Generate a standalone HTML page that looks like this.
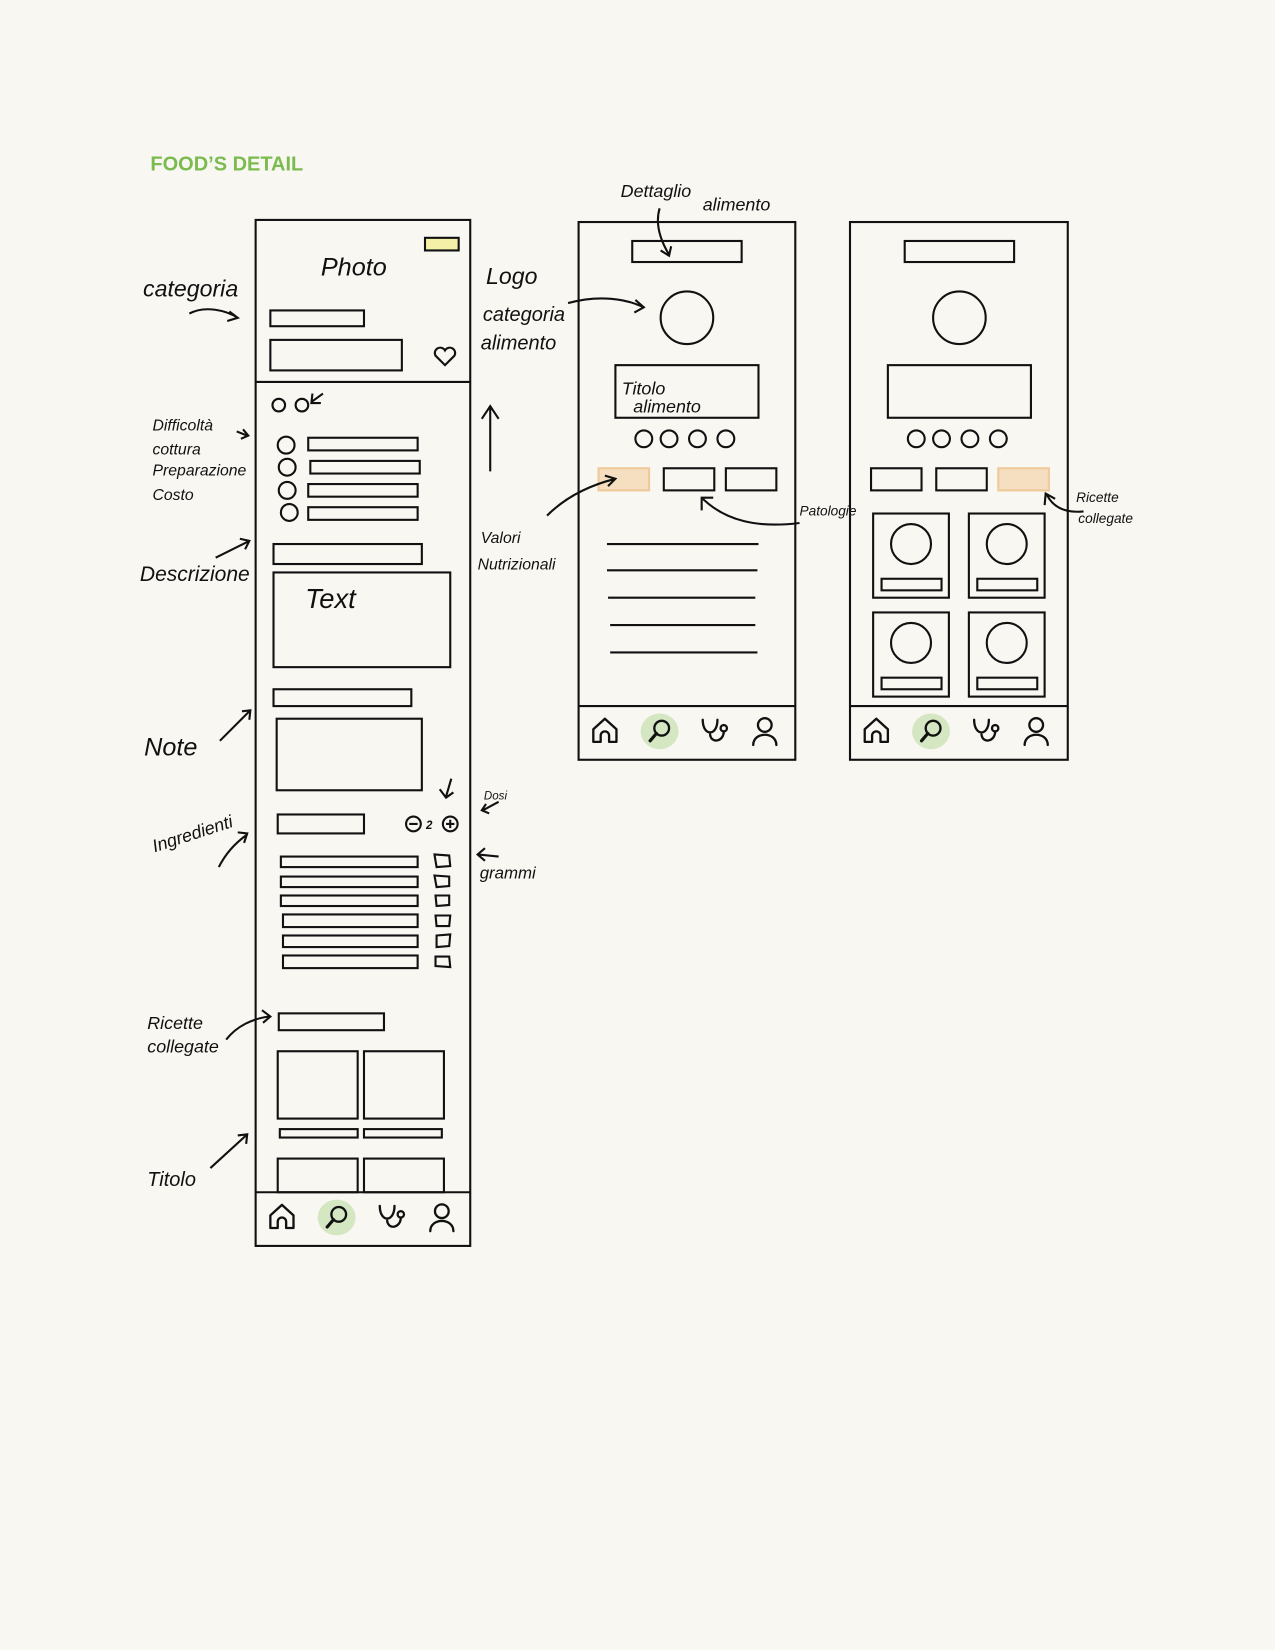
<!DOCTYPE html>
<html><head><meta charset="utf-8"><style>
html,body{margin:0;padding:0;background:#f8f7f2;}
svg{display:block}
.h{font-family:"Liberation Sans",sans-serif;font-style:italic;fill:#111}
</style></head><body>
<svg width="1275" height="1650" viewBox="0 0 1212 1568" preserveAspectRatio="none" xmlns="http://www.w3.org/2000/svg">
<defs>
<g id="nav" fill="none" stroke="#111" stroke-width="2.2" stroke-linecap="round" stroke-linejoin="round">
  <path d="M-11,10 V-2 L0,-12 L11,-2 V10 H4 V4 a4,4 0 0 0 -8,0 V10 Z" transform="translate(0,0)"/>
  <g transform="translate(52,0)"><ellipse cx="0" cy="0" rx="18" ry="17" fill="#d5e7c2" stroke="none"/><circle cx="2" cy="-3" r="7"/><line x1="-3" y1="2" x2="-9" y2="9" stroke-width="3"/></g>
  <g transform="translate(103,0)"><path d="M-10,-11 C-10,5 4,5 4,-11"/><path d="M-3,3 C-2,12 10,10 10,0"/><circle cx="10" cy="-3" r="3"/></g>
  <g transform="translate(152,0)"><circle cx="0" cy="-6" r="6.5"/><path d="M-11,13 C-11,0 11,0 11,13"/></g>
</g>
</defs>
<rect width="1212" height="1568" fill="#f8f7f2"/>
<text x="143" y="162" font-family="Liberation Sans,sans-serif" font-weight="bold" font-size="19" fill="#7cbb4f">FOOD’S DETAIL</text>

<g fill="none" stroke="#111" stroke-width="2">
<!-- phone 1 -->
<rect x="243" y="209" width="204" height="975"/>
<rect x="404" y="226" width="32" height="12" fill="#f5f0a8"/>
<rect x="257" y="295" width="89" height="15"/>
<rect x="257" y="323" width="125" height="29"/>
<path d="M423,347 L414,338 a5,5 0 0 1 9,-5 a5,5 0 0 1 9,5 Z"/>
<line x1="243" y1="363" x2="447" y2="363"/>
<circle cx="265" cy="385" r="6"/><circle cx="287" cy="385" r="6"/>
<circle cx="272" cy="423" r="8"/><circle cx="273" cy="444" r="8"/><circle cx="273" cy="466" r="8"/><circle cx="275" cy="487" r="8"/>
<rect x="293" y="416" width="104" height="12"/><rect x="295" y="438" width="104" height="12"/>
<rect x="293" y="460" width="104" height="12"/><rect x="293" y="482" width="104" height="12"/>
<rect x="260" y="517" width="141" height="19"/>
<rect x="260" y="544" width="168" height="90"/>
<rect x="260" y="655" width="131" height="16"/>
<rect x="263" y="683" width="138" height="68"/>
<rect x="264" y="774" width="82" height="18"/>
<circle cx="393" cy="783" r="7"/><line x1="389" y1="783" x2="397" y2="783"/>
<circle cx="428" cy="783" r="7"/><line x1="424" y1="783" x2="432" y2="783"/><line x1="428" y1="779" x2="428" y2="787"/>
<rect x="267" y="814" width="130" height="10"/><rect x="267" y="833" width="130" height="10"/>
<rect x="267" y="851" width="130" height="10"/><rect x="269" y="869" width="128" height="12"/>
<rect x="269" y="889" width="128" height="11"/><rect x="269" y="908" width="128" height="12"/>
<path d="M413,812 L427,813 L428,823 L415,824 Z"/><path d="M413,832 L427,833 L427,842 L415,843 Z"/>
<path d="M414,851 L427,851 L427,860 L415,861 Z"/><path d="M414,870 L428,870 L427,880 L415,880 Z"/>
<path d="M415,889 L428,888 L427,899 L415,900 Z"/><path d="M414,909 L427,909 L428,919 L414,918 Z"/>
<rect x="265" y="963" width="100" height="16"/>
<rect x="264" y="999" width="76" height="64"/><rect x="346" y="999" width="76" height="64"/>
<rect x="266" y="1073" width="74" height="8"/><rect x="346" y="1073" width="74" height="8"/>
<rect x="264" y="1101" width="76" height="32"/><rect x="346" y="1101" width="76" height="32"/>
<line x1="243" y1="1133" x2="447" y2="1133"/>

<!-- phone 2 -->
<rect x="550" y="211" width="206" height="511"/>
<rect x="601" y="229" width="104" height="20"/>
<circle cx="653" cy="302" r="25"/>
<rect x="585" y="347" width="136" height="50"/>
<circle cx="612" cy="417" r="8"/><circle cx="636" cy="417" r="8"/><circle cx="663" cy="417" r="8"/><circle cx="690" cy="417" r="8"/>
<rect x="569" y="445" width="48" height="21" fill="#f6dfc0" stroke="#f0c99a"/>
<rect x="631" y="445" width="48" height="21"/><rect x="690" y="445" width="48" height="21"/>
<line x1="577" y1="517" x2="721" y2="517"/><line x1="577" y1="542" x2="720" y2="542"/>
<line x1="578" y1="568" x2="718" y2="568"/><line x1="580" y1="594" x2="718" y2="594"/>
<line x1="580" y1="620" x2="720" y2="620"/>
<line x1="550" y1="671" x2="756" y2="671"/>

<!-- phone 3 -->
<rect x="808" y="211" width="207" height="511"/>
<rect x="860" y="229" width="104" height="20"/>
<circle cx="912" cy="302" r="25"/>
<rect x="844" y="347" width="136" height="50"/>
<circle cx="871" cy="417" r="8"/><circle cx="895" cy="417" r="8"/><circle cx="922" cy="417" r="8"/><circle cx="949" cy="417" r="8"/>
<rect x="828" y="445" width="48" height="21"/><rect x="890" y="445" width="48" height="21"/>
<rect x="949" y="445" width="48" height="21" fill="#f6dfc0" stroke="#f0c99a"/>
<rect x="830" y="488" width="72" height="80"/><circle cx="866" cy="517" r="19"/><rect x="838" y="550" width="57" height="11"/>
<rect x="921" y="488" width="72" height="80"/><circle cx="957" cy="517" r="19"/><rect x="929" y="550" width="57" height="11"/>
<rect x="830" y="582" width="72" height="80"/><circle cx="866" cy="611" r="19"/><rect x="838" y="644" width="57" height="11"/>
<rect x="921" y="582" width="72" height="80"/><circle cx="957" cy="611" r="19"/><rect x="929" y="644" width="57" height="11"/>
<line x1="808" y1="671" x2="1015" y2="671"/>

<!-- arrows -->
<path d="M180,298 C195,290 215,295 226,302 M218,296 L226,302 L216,305"/>
<path d="M466,448 V388 M458,398 L466,386 L474,398"/>
<path d="M627,198 C622,215 630,232 636,242 M628,238 L636,243 L638,234"/>
<path d="M540,288 C570,280 595,284 612,292 M604,285 L612,292 L603,297"/>
<path d="M520,490 C540,470 565,460 585,455 M575,452 L585,455 L578,462"/>
<path d="M760,497 C720,502 690,495 668,474 M667,485 L667,473 L678,473"/>
<path d="M1030,486 C1010,488 1000,480 995,470 M993,480 L994,469 L1003,474"/>
<path d="M205,530 L237,514 M228,512 L237,514 L233,522"/>
<path d="M209,704 L238,675 M230,676 L238,675 L237,684"/>
<path d="M208,824 C215,810 225,800 235,793 M226,791 L235,792 L232,801"/>
<path d="M215,988 C225,975 240,968 256,966 M249,960 L257,966 L250,972"/>
<path d="M200,1110 L235,1078 M226,1079 L235,1078 L234,1087"/>
<path d="M429,740 L424,757 M418,750 L424,758 L431,753"/>
<path d="M474,762 L459,770 M462,764 L458,770 L465,773"/>
<path d="M474,814 L454,812 M461,806 L454,812 L461,818"/>
<path d="M296,382 L307,374 M297,374 L296,383 L305,383"/>
<path d="M225,410 L235,414 M231,408 L236,414 L229,417"/>
</g>

<g transform="translate(268,1157)"><use href="#nav"/></g>
<g transform="translate(575,695)"><use href="#nav"/></g>
<g transform="translate(833,695)"><use href="#nav"/></g>

<text class="h" x="305" y="262" font-size="24">Photo</text>
<text class="h" x="290" y="578" font-size="26">Text</text>
<text class="h" x="405" y="788" font-size="11" font-weight="bold">2</text>
<text class="h" x="591" y="375" font-size="17">Titolo</text>
<text class="h" x="602" y="392" font-size="17">alimento</text>

<text class="h" x="136" y="282" font-size="22">categoria</text>
<text class="h" x="145" y="409" font-size="15">Difficoltà</text>
<text class="h" x="145" y="432" font-size="15">cottura</text>
<text class="h" x="145" y="452" font-size="15">Preparazione</text>
<text class="h" x="145" y="475" font-size="15">Costo</text>
<text class="h" x="133" y="552" font-size="20">Descrizione</text>
<text class="h" x="137" y="718" font-size="24">Note</text>
<text class="h" x="147" y="810" font-size="17" transform="rotate(-18 147 810)">Ingredienti</text>
<text class="h" x="140" y="978" font-size="17">Ricette</text>
<text class="h" x="140" y="1000" font-size="17">collegate</text>
<text class="h" x="140" y="1127" font-size="19">Titolo</text>
<text class="h" x="462" y="270" font-size="22">Logo</text>
<text class="h" x="459" y="305" font-size="19">categoria</text>
<text class="h" x="457" y="332" font-size="19">alimento</text>
<text class="h" x="590" y="187" font-size="17">Dettaglio</text>
<text class="h" x="668" y="200" font-size="17">alimento</text>
<text class="h" x="457" y="516" font-size="15">Valori</text>
<text class="h" x="454" y="541" font-size="15">Nutrizionali</text>
<text class="h" x="760" y="490" font-size="13">Patologie</text>
<text class="h" x="1023" y="477" font-size="13">Ricette</text>
<text class="h" x="1025" y="497" font-size="13">collegate</text>
<text class="h" x="460" y="760" font-size="11">Dosi</text>
<text class="h" x="456" y="835" font-size="16">grammi</text>
</svg>
</body></html>
